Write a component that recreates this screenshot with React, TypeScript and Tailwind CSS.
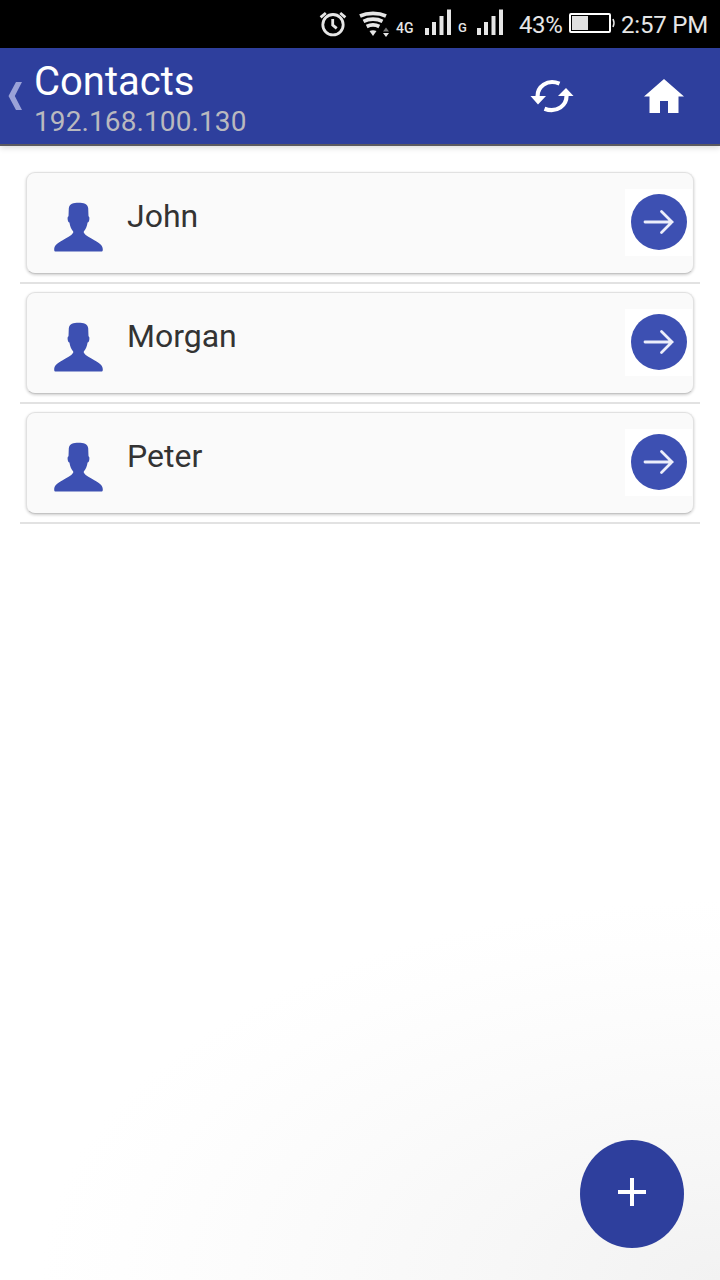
const contacts = ["John", "Morgan", "Peter"];

/* ---------- Status bar ---------- */
function SignalBars() {
  return (
    <svg className="h-12 w-7 shrink-0" viewBox="0 0 28 48" fill="#e6e6e6">
      <rect x="1" y="28" width="4" height="7" />
      <rect x="8" y="22" width="4" height="13" />
      <rect x="15.5" y="16" width="4" height="19" />
      <rect x="23" y="9.5" width="4" height="25.5" />
    </svg>
  );
}

function StatusBar() {
  return (
    <div className="flex h-12 items-center bg-black pl-[318px] text-2xl whitespace-nowrap text-[#e6e6e6]">
      <svg
        className="h-12 w-[30px] shrink-0"
        viewBox="0 0 30 48"
        fill="none"
        stroke="#e6e6e6"
        strokeWidth="2.8"
      >
        <circle cx="15" cy="24.7" r="10.2" />
        <path d="M14.7 19v6l4 3.4" />
        <path d="M2.6 17.4l5.2-4.4M27.4 17.4l-5.2-4.4" />
      </svg>
      <svg className="ml-2.5 h-12 w-8 shrink-0" viewBox="0 0 32 48">
        <g fill="none" stroke="#e6e6e6" strokeWidth="3.7">
          <path d="M2 16C9.5 12.500 20.500 12.500 28 16" />
          <path d="M5.500 21.300c5.500-2.800 13.500-2.800 19 0" />
          <path d="M8.700 26.500c4-2.100 8.600-2.100 12.600 0" />
        </g>
        <path d="M11.500 31c2.300-1 4.700-1 7 0L15 36z" fill="#e6e6e6" />
        <path d="M25 31.500l3-4 3 4z" fill="#777777" />
        <path d="M25 33l3 4 3-4z" fill="#e6e6e6" />
      </svg>
      <span className="mt-[7px] ml-1.5 w-7 text-[14px] leading-4 font-medium">
        4G
      </span>
      <SignalBars />
      <span className="mt-[7px] ml-1.5 w-[18px] text-[13px] leading-4 font-medium">
        G
      </span>
      <SignalBars />
      <span className="ml-[15px] w-[49px] pt-0.5 tracking-[-0.4px]">43%</span>
      <svg className="h-12 w-12 shrink-0" viewBox="0 0 48 48">
        <rect
          x="2"
          y="14"
          width="40"
          height="18"
          rx="1"
          fill="none"
          stroke="#ffffff"
          strokeWidth="2"
        />
        <rect x="4" y="16" width="16" height="14" fill="#e0e0e0" />
        <path d="M45 19q2 4 0 8" fill="none" stroke="#e6e6e6" strokeWidth="1.500" />
      </svg>
      <span className="ml-[5px] pt-0.5 tracking-[-0.2px]">2:57 PM</span>
    </div>
  );
}

/* ---------- App bar ---------- */
function AppBar() {
  return (
    <header className="relative flex h-[98px] items-center border-b-2 border-[#5c5a60] bg-[#2e3f9d] pl-2 shadow-[0_2px_6px_rgba(0,0,0,0.14)]">
      <svg className="h-7 w-3.5 shrink-0" viewBox="0 0 14 28" fill="#9aa2d8">
        <path d="M8 0H14L6.800 14 14 28H8L.5 14z" />
      </svg>
      <div className="ml-3 flex-1">
        <h1 className="pt-[7px] text-[40px] leading-[44px] text-white">Contacts</h1>
        <p className="text-[28px] leading-9 tracking-[0.1px] text-[#b9b9bf]">
          192.168.100.130
        </p>
      </div>
      <svg
        className="mr-[70px] h-9 w-11"
        viewBox="0 0 44 36"
        fill="none"
        stroke="#ffffff"
        strokeWidth="4.200"
      >
        <path d="M7.600 19C7 9 17 .5 29.500 5.600" />
        <path d="M36.400 16.500C37.500 27 27 35.500 14.500 30.800" />
        <path d="M.5 18h15.500L8 26.500zM28 18h15.500L36 10z" fill="#ffffff" stroke="none" />
      </svg>
      <svg className="mr-9 mb-px h-[34px] w-10" viewBox="0 0 40 34" fill="#ffffff">
        <path d="M20 0L40 17.500H34.500V34H24V22H16V34H5.500V17.500H0z" />
      </svg>
    </header>
  );
}

/* ---------- Contact row ---------- */
function ContactRow({ name }: { name: string }) {
  return (
    <li className="h-[120px] border-b-2 border-[#e2e2e2] px-1.5 pt-2">
      <div className="flex h-[102px] items-start rounded-[9px] border border-[#e1e1e1] border-b-[#c4c4c4] bg-[#fafafa] shadow-[0_1px_3px_rgba(0,0,0,0.2)]">
        <svg
          className="mt-[29px] ml-[27px] h-[50px] w-[49px]"
          viewBox="0 0 49 50"
          fill="#3d50b2"
        >
          <path d="M24.500.8c5 0 9.200 1 9.700 5.500l.3 8c1 .2 1 1.800.8 3.400-.2 1.500-.8 2.800-1.700 2.900-.6 4-2 6.800-3.800 9v1.200c2 3.200 6.500 5.200 11 7.600 4.800 2.500 8 5 8 9 0 1.200-.3 2-.9 2H1.100c-.6 0-.9-.8-.9-2 0-4 3.200-6.500 8-9 4.500-2.400 9-4.400 11-7.600v-1.200c-1.800-2.200-3.200-5-3.800-9-.9-.1-1.500-1.400-1.700-2.900-.2-1.600-.2-3.200.8-3.400l.3-8C15.300 1.800 19.500.8 24.500.8z" />
        </svg>
        <span className="mt-[23px] ml-6 flex-1 text-[32px] leading-10 text-[#333333]">
          {name}
        </span>
        <div className="mt-4 mr-px grid h-[67px] w-[67px] place-items-center bg-white pb-0.5">
          <svg
            className="h-14 w-14"
            viewBox="0 0 56 56"
            fill="none"
            stroke="#eceefb"
            strokeWidth="2.800"
          >
            <circle cx="28" cy="28" r="28" fill="#3d50b2" stroke="none" />
            <path d="M14 28h27M30.500 17.500L41 28 30.500 38.500" strokeLinecap="round" />
          </svg>
        </div>
      </div>
    </li>
  );
}

export default function App() {
  return (
    <div className="relative flex h-[1280px] w-[720px] flex-col overflow-hidden bg-white bg-[radial-gradient(ellipse_680px_380px_at_100%_100%,#f2f2f2_0%,#f7f7f7_32%,#fbfbfb_62%,#fefefe_88%,#ffffff_100%)] font-[Roboto,sans-serif]">
      <StatusBar />
      <AppBar />
      <ul className="px-5 pt-[18px]">
        {contacts.map((name) => (
          <ContactRow key={name} name={name} />
        ))}
      </ul>
      <button
        aria-label="Add contact"
        className="absolute right-9 bottom-8 grid h-[108px] w-[104px] place-items-center rounded-[50%] bg-[#2e3f9d]"
      >
        <svg
          className="mb-1 h-7 w-7"
          viewBox="0 0 28 28"
          stroke="#ffffff"
          strokeWidth="4"
        >
          <path d="M14 0v28M0 14h28" />
        </svg>
      </button>
    </div>
  );
}
